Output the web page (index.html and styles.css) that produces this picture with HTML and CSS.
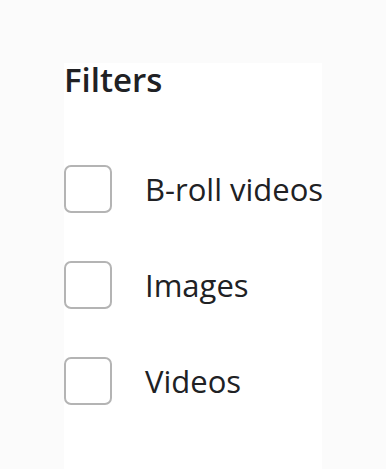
FILE: index.html
```html
<!DOCTYPE html>
<html>
<head>
<meta charset="utf-8">
<link rel="stylesheet" href="styles.css">
</head>
<body>
<div class="panel">
  <h2 class="title">Filters</h2>
  <ul class="list">
    <li class="item"><span class="box"></span><span class="label">B-roll videos</span></li>
    <li class="item"><span class="box"></span><span class="label">Images</span></li>
    <li class="item"><span class="box"></span><span class="label">Videos</span></li>
  </ul>
</div>
</body>
</html>
```
FILE: styles.css
```css
html, body {
  margin: 0;
  padding: 0;
  height: 100%;
}
body {
  background: #fbfbfb;
  font-family: "Open Sans", "Liberation Sans", sans-serif;
  color: #202124;
  padding: 63px 0 0 64px;
  box-sizing: border-box;
}
.panel {
  background: #ffffff;
  width: 258px;
  height: 100%;
}
.title {
  margin: 0;
  font-size: 33px;
  font-weight: 600;
  line-height: 34px;
  padding-top: 0;
}
.list {
  list-style: none;
  margin: 0;
  padding: 68px 0 0 0;
  display: flex;
  flex-direction: column;
  gap: 48px;
}
.item {
  display: flex;
  align-items: center;
  gap: 33px;
  height: 48px;
}
.box {
  width: 48px;
  height: 48px;
  box-sizing: border-box;
  border: 2px solid #b4b4b4;
  border-radius: 7px;
  flex: none;
}
.label {
  font-size: 31px;
  line-height: 34px;
  white-space: nowrap;
}
```
